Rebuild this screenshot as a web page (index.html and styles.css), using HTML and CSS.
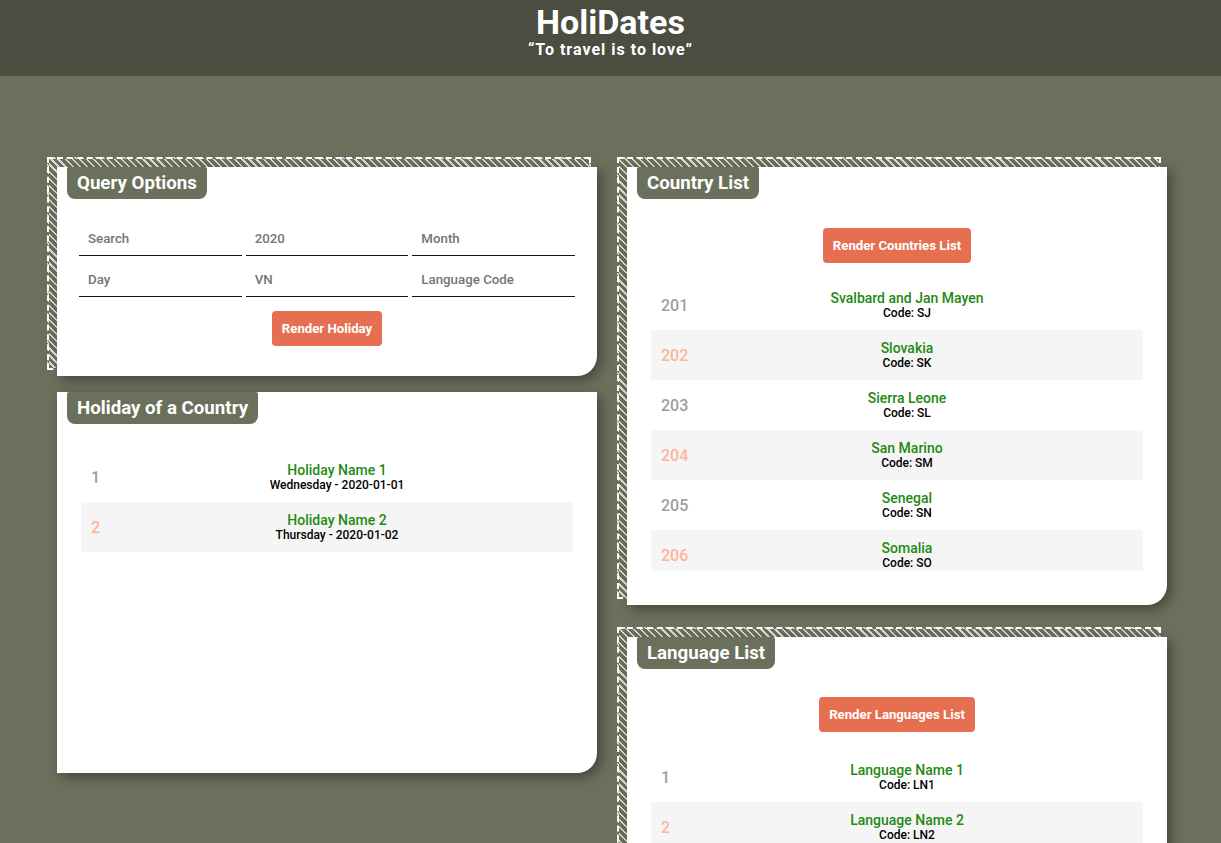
FILE: index.html
```html
<!DOCTYPE html>
<html lang="en">
<head>
<meta charset="utf-8">
<title>HoliDates</title>
<link rel="stylesheet" href="styles.css">
</head>
<body>
<header class="site-header">
  <h1 class="site-title">HoliDates</h1>
  <p class="site-tagline">“To travel is to love”</p>
</header>

<main class="layout">
  <div class="column">
    <section class="card card--hatched card--query">
      <h2 class="card-tab">Query Options</h2>
      <div class="query-grid">
        <input class="field" type="text" placeholder="Search">
        <input class="field" type="text" placeholder="2020">
        <input class="field" type="text" placeholder="Month">
        <input class="field" type="text" placeholder="Day">
        <input class="field" type="text" placeholder="VN">
        <input class="field" type="text" placeholder="Language Code">
      </div>
      <div class="actions actions--query">
        <button class="btn" type="button">Render Holiday</button>
      </div>
    </section>

    <section class="card card--holiday">
      <h2 class="card-tab">Holiday of a Country</h2>
      <ul class="item-list item-list--holiday">
        <li class="item">
          <span class="item-num">1</span>
          <div class="item-body">
            <div class="item-name">Holiday Name 1</div>
            <div class="item-sub">Wednesday - 2020-01-01</div>
          </div>
        </li>
        <li class="item">
          <span class="item-num">2</span>
          <div class="item-body">
            <div class="item-name">Holiday Name 2</div>
            <div class="item-sub">Thursday - 2020-01-02</div>
          </div>
        </li>
      </ul>
    </section>
  </div>

  <div class="column">
    <section class="card card--hatched card--country">
      <h2 class="card-tab">Country List</h2>
      <div class="actions actions--list">
        <button class="btn" type="button">Render Countries List</button>
      </div>
      <ul class="item-list item-list--country">
        <li class="item"><span class="item-num">201</span><div class="item-body"><div class="item-name">Svalbard and Jan Mayen</div><div class="item-sub">Code: SJ</div></div></li>
        <li class="item"><span class="item-num">202</span><div class="item-body"><div class="item-name">Slovakia</div><div class="item-sub">Code: SK</div></div></li>
        <li class="item"><span class="item-num">203</span><div class="item-body"><div class="item-name">Sierra Leone</div><div class="item-sub">Code: SL</div></div></li>
        <li class="item"><span class="item-num">204</span><div class="item-body"><div class="item-name">San Marino</div><div class="item-sub">Code: SM</div></div></li>
        <li class="item"><span class="item-num">205</span><div class="item-body"><div class="item-name">Senegal</div><div class="item-sub">Code: SN</div></div></li>
        <li class="item"><span class="item-num">206</span><div class="item-body"><div class="item-name">Somalia</div><div class="item-sub">Code: SO</div></div></li>
      </ul>
    </section>

    <section class="card card--hatched card--language">
      <h2 class="card-tab">Language List</h2>
      <div class="actions actions--list">
        <button class="btn" type="button">Render Languages List</button>
      </div>
      <ul class="item-list item-list--language">
        <li class="item"><span class="item-num">1</span><div class="item-body"><div class="item-name">Language Name 1</div><div class="item-sub">Code: LN1</div></div></li>
        <li class="item"><span class="item-num">2</span><div class="item-body"><div class="item-name">Language Name 2</div><div class="item-sub">Code: LN2</div></div></li>
      </ul>
    </section>
  </div>
</main>
</body>
</html>
```

FILE: styles.css
```css
* {
  box-sizing: border-box;
}

html, body {
  margin: 0;
  padding: 0;
}

body {
  background: #6b705c;
  font-family: Roboto, "Liberation Sans", Arial, sans-serif;
  color: #000;
  min-height: 100vh;
}

/* Header */
.site-header {
  height: 76px;
  background: #4b4d41;
  text-align: center;
  color: #fff;
  padding-top: 4px;
}

.site-title {
  margin: 0;
  font-size: 34px;
  line-height: 37px;
  font-weight: 700;
}

.site-tagline {
  margin: 0;
  font-size: 16px;
  line-height: 18px;
  font-weight: 700;
  letter-spacing: 1px;
}

/* Layout */
.layout {
  display: grid;
  grid-template-columns: 540px 540px;
  column-gap: 30px;
  padding: 91px 0 0 57px;
  align-items: start;
}

.column {
  display: flex;
  flex-direction: column;
}

/* Cards */
.card {
  position: relative;
  background: #fff;
  border-radius: 0 0 20px 0;
  box-shadow: 4px 4px 12px rgba(0, 0, 0, 0.38);
}

.card--hatched::before {
  content: "";
  position: absolute;
  top: -10px;
  left: -10px;
  width: 100%;
  height: 100%;
  z-index: -1;
  border: 2px dashed #ffffff;
  background: repeating-linear-gradient(45deg, transparent 0 3.4px, #dcdcd4 3.4px 5px);
}

.card-tab {
  display: inline-block;
  margin: 0 0 0 10px;
  height: 32px;
  padding: 0 10px;
  background: #6b705c;
  color: #fff;
  font-size: 18.7px;
  line-height: 32px;
  font-weight: 700;
  border-radius: 2px 2px 8px 8px;
}

.card--query {
  padding: 0 22px 30px 0;
}

.card--holiday {
  margin-top: 16px;
  min-height: 381px;
}

.card--country {
  padding-bottom: 34px;
}

.card--language {
  margin-top: 32px;
  min-height: 260px;
}

/* Query form */
.query-grid {
  display: grid;
  grid-template-columns: repeat(3, 1fr);
  column-gap: 4px;
  row-gap: 6px;
  margin: 22px 0 0 22px;
}

.field {
  display: block;
  width: 100%;
  height: 35px;
  border: none;
  border-bottom: 1px solid #111;
  outline: none;
  padding: 0 9px;
  font-family: Roboto, "Liberation Sans", Arial, sans-serif;
  font-size: 13.3px;
  font-weight: 500;
  color: #757575;
  background: transparent;
}

.field::placeholder {
  color: #757575;
  opacity: 1;
}

.actions {
  display: flex;
  justify-content: center;
}

.actions--query {
  margin: 14px 0 0 22px;
}

.actions--list {
  margin-top: 29px;
}

.card--language .actions--list {
  margin-top: 28px;
}

.btn {
  height: 35px;
  padding: 0 10px;
  border: none;
  border-radius: 4px;
  background: #e76f51;
  color: #fff;
  font-family: Roboto, "Liberation Sans", Arial, sans-serif;
  font-size: 13.2px;
  font-weight: 700;
  cursor: pointer;
}

/* Lists */
.item-list {
  list-style: none;
  margin: 0 24px;
  padding: 0;
}

.item-list--holiday {
  margin-top: 28px;
}

.item-list--country {
  margin-top: 17px;
  height: 291px;
  overflow: hidden;
}

.item-list--language {
  margin-top: 20px;
}

.item {
  display: flex;
  align-items: center;
  height: 50px;
  padding: 0 10px;
}

.item:nth-child(even) {
  background: #f5f5f5;
}

.item-num {
  flex: none;
  width: 20px;
  white-space: nowrap;
  font-size: 16px;
  font-weight: 500;
  color: #9e9e9e;
}

.item:nth-child(even) .item-num {
  color: #fbb59b;
}

.item-body {
  flex: 1;
  text-align: center;
}

.item-name {
  font-size: 14px;
  line-height: 15px;
  font-weight: 500;
  color: #1f8a12;
}

.item-sub {
  font-size: 12px;
  line-height: 14px;
  font-weight: 500;
  color: #000;
}
```
